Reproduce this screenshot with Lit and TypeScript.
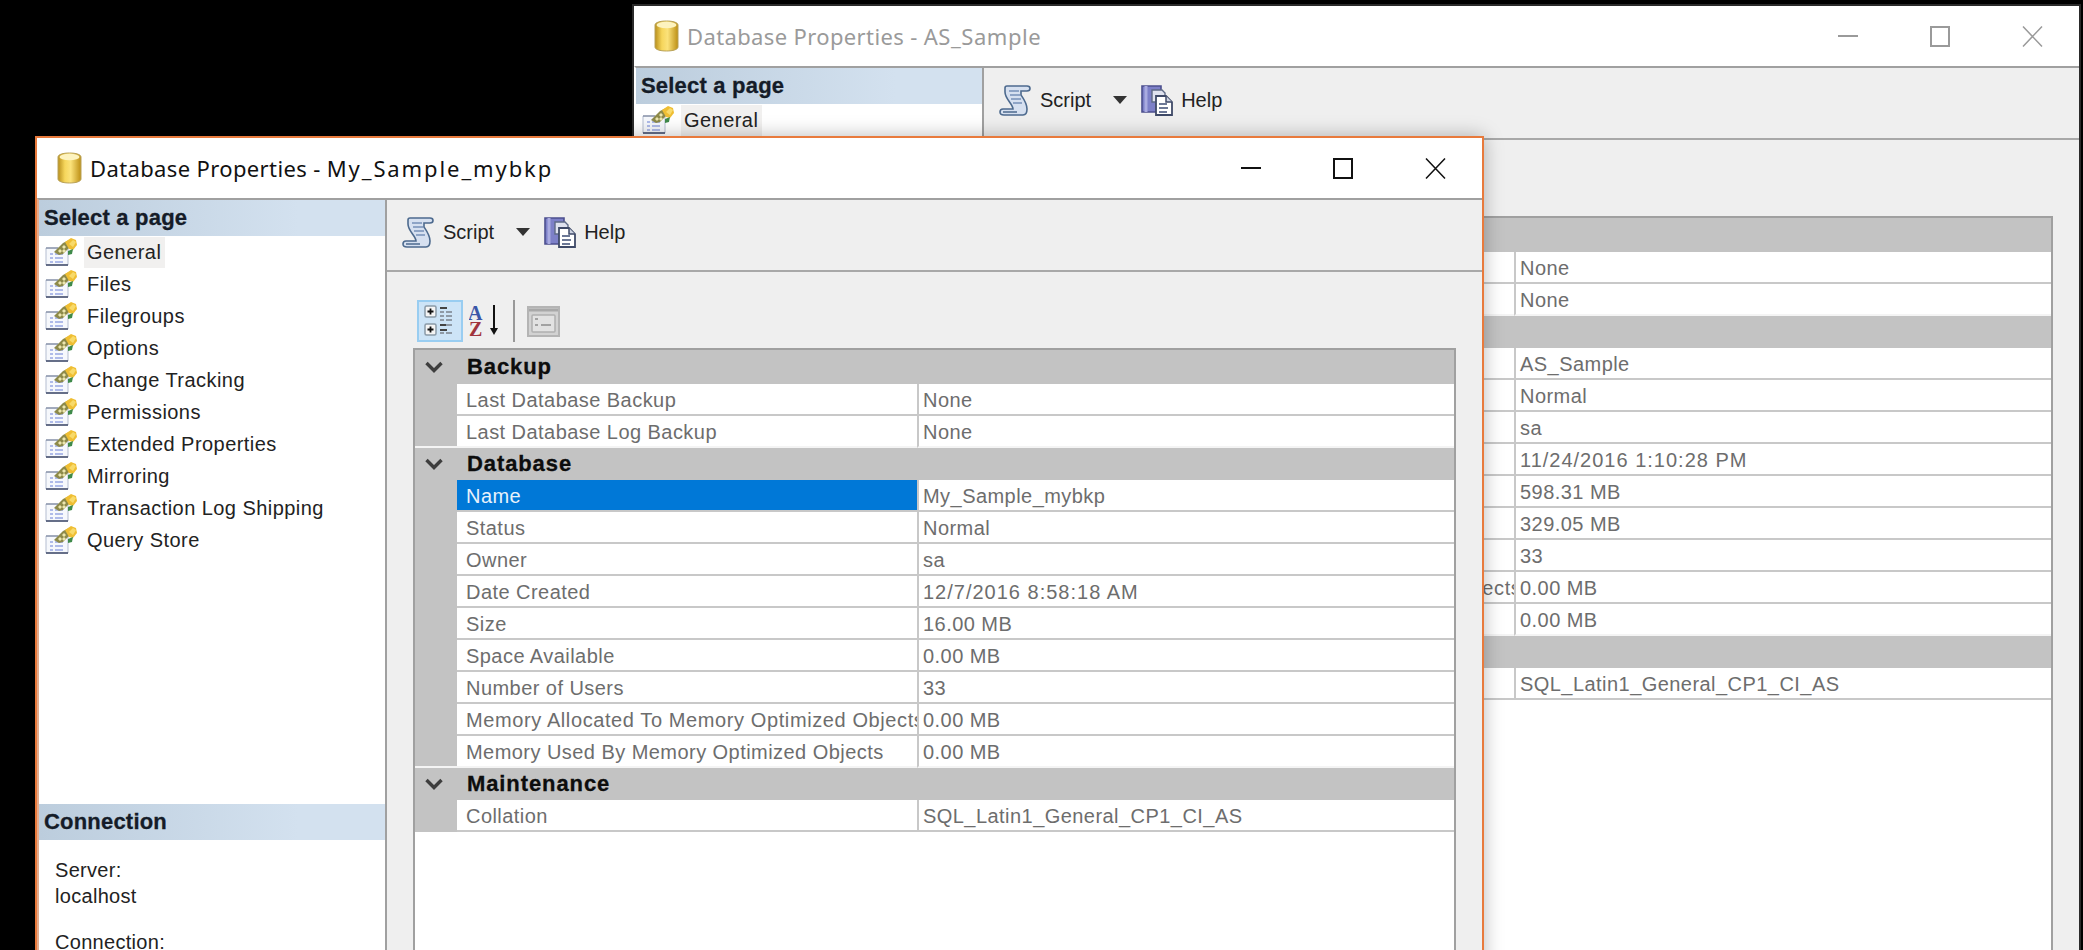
import { LitElement, html, css, svg } from "lit";
import { customElement, property } from "lit/decorators.js";

type Row = { label: string; value: string; selected?: boolean; wide?: boolean; longLabel?: boolean };
type Group = { name: string; rows: Row[] };

const cylinder = svg`<svg class="cyl" width="25" height="32" viewBox="0 0 25 32">
  <defs><linearGradient id="cg" x1="0" x2="1" y1="0" y2="0">
    <stop offset="0" stop-color="#b88f1c"/><stop offset=".3" stop-color="#f6d65c"/><stop offset=".55" stop-color="#fbe27a"/><stop offset="1" stop-color="#bd8f14"/></linearGradient></defs>
  <path d="M1 5c0-2.500 5-4 11.500-4S24 2.500 24 5v22c0 2.500-5 4-11.500 4S1 29.500 1 27z" fill="url(#cg)" stroke="#b9a25a" stroke-width="1"/>
  <ellipse cx="12.500" cy="5" rx="10" ry="3.200" fill="#fdf3bf"/>
</svg>`;

const propIcon = svg`<svg class="ni" width="32" height="28" viewBox="0 0 32 28">
  <path d="M1 10h22v17H1z" fill="#f6f8fc" stroke="#b4bdd0" stroke-width="1"/>
  <path d="M1 27h22" stroke="#3f4a68" stroke-width="1.500"/>
  <path d="M1 10h12" stroke="#6d7892" stroke-width="1"/>
  <path d="M5 16h3M10 16h8M5 20h3M10 20h8M5 24h3M10 24h8" stroke="#98a6e2" stroke-width="1.600"/>
  <path d="M9 14 18 5l6-3 2 6-8 8-4 1z" fill="#8d8a4a"/>
  <path d="M13 13l2-2 2 2-2 2zM17 9l2-2 2 2-2 2zM17 13l2-2 2 2-2 2zM21 5l2-2 2 2-2 2z" fill="#ece6ae"/>
  <path d="M20 4 26 0l5 2 1 5-4 5-4-1z" fill="#efbe33"/>
  <path d="M24 6l4-4 3 2-3 5z" fill="#f8da6a"/>
  <path d="M23 13l5-2-1 5-4 1z" fill="#3f8a4a"/>
</svg>`;

const scriptIcon = svg`<svg width="32" height="31" viewBox="0 0 32 31">
  <path d="M6 3c0-1 1-2 2-2h20c2 0 3 1 3 2.500S30 6 28 6h-6v4c2 3 6 8 6 14 0 3-1 6-4 6H5c-3 0-4-1.500-4-3s1-3 3-3h10c0-5-8-10-8-17z" fill="#d6e0f0" stroke="#4d6a8e" stroke-width="1.600"/>
  <path d="M10 6h10M11 10h10M12 14h10M14 18h9" stroke="#8ea4c6" stroke-width="1.800"/>
  <path d="M4 27h14" stroke="#4d6a8e" stroke-width="1.500"/>
</svg>`;

const helpIcon = svg`<svg width="33" height="32" viewBox="0 0 33 32">
  <path d="M1 2h19v26H1z" fill="#7d80c8" stroke="#4c4f8e" stroke-width="1.600"/>
  <path d="M5 2v26" stroke="#a9abe0" stroke-width="3"/>
  <path d="M11 6h10l3 3v9H11z" fill="#dfe2ef" stroke="#5e6a86" stroke-width="1.400"/>
  <path d="M15 12h10l6 6v13H15z" fill="#fff" stroke="#3f4a68" stroke-width="1.800"/>
  <path d="M25 12v6h6" fill="#cdd3e2" stroke="#3f4a68" stroke-width="1.500"/>
  <path d="M18 20h8M18 24h9M18 28h8" stroke="#6c7896" stroke-width="1.800"/>
</svg>`;

const categorized = svg`<svg width="32" height="32" viewBox="0 0 32 32">
  <rect x="1" y="1" width="11" height="11" rx="1.500" fill="#f5f5f5" stroke="#8a9aa8" stroke-width="1.500"/>
  <rect x="1" y="19" width="11" height="11" rx="1.500" fill="#f5f5f5" stroke="#8a9aa8" stroke-width="1.500"/>
  <path d="M3.500 6.500h6M6.500 3.500v6M3.500 24.500h6M6.500 21.500v6" stroke="#111" stroke-width="1.800"/>
  <path d="M16 3h7M16 20h7" stroke="#444" stroke-width="2"/>
  <path d="M16 7h4M22 7h6M16 11h4M22 11h6M16 15h4M22 15h6M22 20h6M16 28h4M22 28h6" stroke="#8f9aa6" stroke-width="1.800"/>
  <path d="M16 25h7" stroke="#444" stroke-width="2"/>
</svg>`;

const azIcon = svg`<svg width="32" height="32" viewBox="0 0 32 32">
  <text x="-1" y="15" font-family="Liberation Serif" font-weight="700" font-size="20" fill="#3a56a8">A</text>
  <text x="0" y="31" font-family="Liberation Serif" font-weight="700" font-size="20" fill="#a0343c">Z</text>
  <path d="M25 0v26" stroke="#111" stroke-width="2"/>
  <path d="M21 23h8l-4 7z" fill="#111"/>
</svg>`;

const pagesIcon = svg`<svg width="33" height="31" viewBox="0 0 33 31">
  <rect x="1" y="1" width="31" height="29" fill="#d2d2d2" stroke="#b4b4b4" stroke-width="2"/>
  <path d="M2 4h29" stroke="#a8a8a8" stroke-width="3"/>
  <rect x="5" y="9" width="23" height="17" rx="1" fill="#e2e2e2" stroke="#b0b0b0" stroke-width="1.500"/>
  <path d="M8 13h3M8 19h3M14 19h10" stroke="#a2a2a2" stroke-width="2"/>
</svg>`;

const chevron = svg`<svg width="18" height="12" viewBox="0 0 18 12"><path d="M1.500 2 9 9.500 16.500 2" fill="none" stroke="#3e3e3e" stroke-width="3.400"/></svg>`;

@customElement("db-window")
class DbWindow extends LitElement {
  @property() heading = "";
  @property() dbname = "";
  @property({ type: Boolean, reflect: true }) active = false;
  @property({ attribute: false }) groups: Group[] = [];
  @property({ attribute: false }) pages: string[] = [];

  static styles = css`
    :host {
      display: flex;
      flex-direction: column;
      width: 1449px;
      height: 950px;
      background: #fff;
      border: solid #2a2a2a;
      border-width: 2px 2px 0 2px;
      box-sizing: border-box;
      font-family: "Liberation Sans", Arial, sans-serif;
      color: #111;
      overflow: hidden;
    }
    :host([active]) {
      border-color: #e87a3c;
      box-shadow: 0 0 18px rgba(0, 0, 0, 0.28);
    }
    .title {
      height: 60px;
      flex: none;
      display: flex;
      align-items: center;
      padding-left: 20px;
      gap: 8px;
      background: #fff;
      font-family: "Noto Sans", sans-serif;
      font-size: 22px;
      color: #9a9a9a;
      white-space: nowrap;
      letter-spacing: 0.37px;
    }
    :host([active]) .title { color: #111; }
    .title .txt { flex: 1; padding-bottom: 1px; }
    .title .name { letter-spacing: 0.55px; }
    :host([active]) .title .name { letter-spacing: 1.9px; }
    .ctrl { display: flex; flex: none; align-items: center; color: #9a9a9a; padding-right: 1px; }
    :host([active]) .ctrl { color: #111; }
    .ctrl svg { display: block; }
    .ctrl .b { width: 92px; display: flex; justify-content: center; }
    .body {
      flex: 1;
      min-height: 0;
      display: flex;
      border-top: 2px solid #a0a0a0;
      border-left: 2px solid #e5ad90;
      background: #efefef;
    }
    :host(:not([active])) .body { border-left-color: #fff; }
    .side {
      width: 346px;
      flex: none;
      display: flex;
      flex-direction: column;
      background: #fff;
      border-right: 2px solid #a0a0a0;
    }
    .shead {
      height: 36px;
      flex: none;
      display: flex;
      align-items: center;
      padding-left: 5px;
      font-weight: 700;
      font-size: 22px;
      letter-spacing: 0.2px;
      -webkit-text-stroke: 0.3px #151c28;
      background: linear-gradient(90deg, #bccddd, #d3e1ef 75%);
      color: #151c28;
    }
    .nav { height: 568px; flex: none; padding-top: 0; }
    .nitem {
      height: 32px;
      display: flex;
      align-items: center;
      padding-left: 6px;
      font-size: 20px;
      letter-spacing: 0.45px;
      color: #222;
    }
    .nitem .ni { flex: none; margin-right: 7px; }
    .nitem span { padding: 0 3px; height: 31px; line-height: 30px; }
    .nitem.sel span { background: #f1f0ef; padding-right: 4px; }
    .conn { padding: 17px 0 0 16px; font-size: 20px; line-height: 26px; color: #222; letter-spacing: 0.3px; }
    .conn p { margin: 0 0 20px; }
    .main { flex: 1; min-width: 0; display: flex; flex-direction: column; }
    .toolbar {
      height: 64px;
      padding-bottom: 6px;
      flex: none;
      box-sizing: content-box;
      display: flex;
      align-items: center;
      padding-left: 15px;
      font-size: 20px;
      letter-spacing: 0;
      border-bottom: 2px solid #a8a8a8;
      color: #222;
    }
    .toolbar svg { display: block; flex: none; }
    .toolbar .lab { margin-left: 9px; }
    .toolbar .lab.help { margin-left: 7px; }
    .toolbar .arrow {
      margin: 0 14px 0 22px;
      width: 0;
      height: 0;
      border: 7px solid transparent;
      border-top: 8px solid #333;
      border-bottom: 0;
    }
    .content {
      flex: 1;
      min-height: 0;
      display: flex;
      flex-direction: column;
      padding: 28px 26px 0 26px;
    }
    .gbar { display: flex; align-items: center; height: 42px; flex: none; margin-bottom: 6px; padding-left: 4px; }
    .gbar .on {
      width: 46px;
      height: 42px;
      box-sizing: border-box;
      background: #cde4f7;
      border: 2px solid #99cdf1;
      display: flex;
      align-items: center;
      justify-content: center;
    }
    .gbar .az { margin: 0 0 0 6px; height: 32px; }
    .gbar .sep { width: 2px; height: 42px; background: #999; margin: 0 12px 0 12px; }
    .gbar svg { display: block; }
    .grid {
      flex: 1;
      min-height: 0;
      background: #fff;
      border: solid #a0a0a0;
      border-width: 2px 2px 0 2px;
      font-size: 20px;
      letter-spacing: 0.45px;
      color: #6d6d6d;
    }
    .ghead {
      height: 32px;
      display: grid;
      grid-template-columns: 42px 1fr;
      align-items: center;
      background: #c3c3c3;
      color: #0d0d0d;
      font-weight: 700;
      font-size: 22px;
      letter-spacing: 0.9px;
      -webkit-text-stroke: 0.3px #0d0d0d;
    }
    .ghead.first { height: 34px; }
    .ghead svg { display: block; margin-left: 10px; }
    .ghead span { padding-left: 10px; }
    .row {
      height: 32px;
      display: grid;
      grid-template-columns: 42px 460px 1fr;
    }
    .row > div { box-sizing: border-box; white-space: nowrap; overflow: hidden; line-height: 32px; border-bottom: 2px solid #c8c8c8; }
    .row .gut { background: #c3c3c3; border-bottom-color: #c3c3c3; }
    .row .lab { padding-left: 9px; }
    .row .lab.long { letter-spacing: 0.6px; }
    .row .val { padding-left: 4px; border-left: 2px solid #c8c8c8; }
    .row .val.wide { letter-spacing: 1px; }
    .row.sel .lab { background: #0078d7; color: #e8f2fb; background-clip: padding-box; }
    .row.last .gut, .row.last .lab, .row.last .val { border-bottom-color: #f4f4f4; }
  `;

  render() {
    const close = html`<svg width="21" height="21" viewBox="0 0 21 21"><path d="M1 .5 20 20.500M20 .5 1 20.500" stroke="currentColor" stroke-width="1.500" fill="none"/></svg>`;
    return html`
      <div class="title">
        ${cylinder}<span class="txt">${this.heading} <span class="name">${this.dbname}</span></span>
        <div class="ctrl">
          <div class="b"><svg width="20" height="2" viewBox="0 0 20 2"><rect width="20" height="2" fill="currentColor"/></svg></div>
          <div class="b"><svg width="20" height="21" viewBox="0 0 20 21"><rect x="1" y="1" width="18" height="19" fill="none" stroke="currentColor" stroke-width="2"/></svg></div>
          <div class="b">${close}</div>
        </div>
      </div>
      <div class="body">
        <div class="side">
          <div class="shead">Select a page</div>
          <div class="nav">
            ${this.pages.map(
              (p, i) => html`<div class="nitem ${i === 0 ? "sel" : ""}">${propIcon}<span>${p}</span></div>`
            )}
          </div>
          <div class="shead">Connection</div>
          <div class="conn">
            <p>Server:<br />localhost</p>
            <p>Connection:</p>
          </div>
        </div>
        <div class="main">
          <div class="toolbar">
            ${scriptIcon}<span class="lab">Script</span><span class="arrow"></span>${helpIcon}<span class="lab help">Help</span>
          </div>
          <div class="content">
            <div class="gbar">
              <div class="on">${categorized}</div>
              <div class="az">${azIcon}</div>
              <div class="sep"></div>
              ${pagesIcon}
            </div>
            <div class="grid">
              ${this.groups.map(
                (g, gi) => html`
                  <div class="ghead ${gi === 0 ? "first" : ""}">${chevron}<span>${g.name}</span></div>
                  ${g.rows.map(
                    (r, ri) => html`
                      <div class="row ${r.selected ? "sel" : ""} ${ri === g.rows.length - 1 && gi < this.groups.length - 1 ? "last" : ""}">
                        <div class="gut"></div>
                        <div class="lab ${r.longLabel ? "long" : ""}">${r.label}</div>
                        <div class="val ${r.wide ? "wide" : ""}">${r.value}</div>
                      </div>
                    `
                  )}
                `
              )}
            </div>
          </div>
        </div>
      </div>
    `;
  }
}

const pages = [
  "General", "Files", "Filegroups", "Options", "Change Tracking", "Permissions",
  "Extended Properties", "Mirroring", "Transaction Log Shipping", "Query Store",
];

const makeGroups = (name: string, created: string, size: string, avail: string, selected: boolean): Group[] => [
  {
    name: "Backup",
    rows: [
      { label: "Last Database Backup", value: "None" },
      { label: "Last Database Log Backup", value: "None" },
    ],
  },
  {
    name: "Database",
    rows: [
      { label: "Name", value: name, selected },
      { label: "Status", value: "Normal" },
      { label: "Owner", value: "sa" },
      { label: "Date Created", value: created, wide: true },
      { label: "Size", value: size },
      { label: "Space Available", value: avail },
      { label: "Number of Users", value: "33" },
      { label: "Memory Allocated To Memory Optimized Objects", value: "0.00 MB", longLabel: true },
      { label: "Memory Used By Memory Optimized Objects", value: "0.00 MB" },
    ],
  },
  {
    name: "Maintenance",
    rows: [{ label: "Collation", value: "SQL_Latin1_General_CP1_CI_AS" }],
  },
];

@customElement("app-root")
class AppRoot extends LitElement {
  static styles = css`
    :host {
      display: block;
      position: relative;
      width: 2083px;
      height: 950px;
      background: #000;
      overflow: hidden;
    }
    .back { position: absolute; left: 632px; top: 4px; }
    .front { position: absolute; left: 35px; top: 136px; }
  `;
  render() {
    return html`
      <db-window class="back" heading="Database Properties -" dbname="AS_Sample" .pages=${pages}
        .groups=${makeGroups("AS_Sample", "11/24/2016 1:10:28 PM", "598.31 MB", "329.05 MB", false)}></db-window>
      <db-window class="front" active heading="Database Properties -" dbname="My_Sample_mybkp" .pages=${pages}
        .groups=${makeGroups("My_Sample_mybkp", "12/7/2016 8:58:18 AM", "16.00 MB", "0.00 MB", true)}></db-window>
    `;
  }
}
